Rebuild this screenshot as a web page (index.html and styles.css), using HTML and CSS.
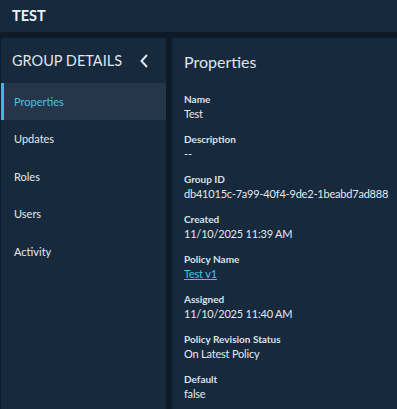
FILE: index.html
```html
<!DOCTYPE HTML>
<html>
<head>
<title>Group details</title>
<link rel="stylesheet" href="styles.css">
</head>
<body>
<div class="topbar">TEST</div>
<div class="layout">
	<div class="sidebar">
		<div class="side_head">
			<span>GROUP DETAILS</span>
			<svg class="chev" width="10" height="16" viewBox="0 0 10 16"><path d="M8 2 L2.5 8 L8 14" fill="none" stroke="#dfe5ea" stroke-width="2"/></svg>
		</div>
		<a class="nav_item active">Properties</a>
		<a class="nav_item">Updates</a>
		<a class="nav_item">Roles</a>
		<a class="nav_item">Users</a>
		<a class="nav_item">Activity</a>
	</div>
	<div class="content">
		<h2>Properties</h2>
		<div class="field"><div class="label">Name</div><div class="value">Test</div></div>
		<div class="field"><div class="label">Description</div><div class="value">--</div></div>
		<div class="field"><div class="label">Group ID</div><div class="value">db41015c-7a99-40f4-9de2-1beabd7ad888</div></div>
		<div class="field"><div class="label">Created</div><div class="value">11/10/2025 11:39 AM</div></div>
		<div class="field"><div class="label">Policy Name</div><div class="value"><a class="link">Test v1</a></div></div>
		<div class="field"><div class="label">Assigned</div><div class="value">11/10/2025 11:40 AM</div></div>
		<div class="field"><div class="label">Policy Revision Status</div><div class="value">On Latest Policy</div></div>
		<div class="field"><div class="label">Default</div><div class="value">false</div></div>
	</div>
</div>
</body>
</html>
```
FILE: styles.css
```css
html {
	background-color:#0d1a28;
}
body {
	margin:0;
	font-family:Lato, "Noto Sans", sans-serif;
	color:#e2e8ee;
	height:409px;
	overflow:hidden;
}
.topbar {
	background-color:#172a3d;
	height:32px;
	line-height:32px;
	padding-left:12px;
	font-weight:bold;
	font-size:14.5px;
	color:#eef2f5;
	margin-bottom:6px;
}
.layout {
	display:flex;
	gap:6px;
	padding-left:1px;
	height:371px;
}
.sidebar {
	width:165px;
	flex-shrink:0;
	background-color:#172a3d;
	display:flex;
	flex-direction:column;
}
.side_head {
	height:45px;
	display:flex;
	align-items:center;
	justify-content:space-between;
	padding:0 17px 0 11px;
	font-size:14.5px;
	white-space:nowrap;
	color:#dfe5ea;
}
.chev {
	margin-top:1px;
}
.nav_item {
	display:block;
	height:37.4px;
	line-height:37.4px;
	padding-left:13px;
	font-size:11px;
	color:#e2e8ee;
	cursor:pointer;
}
.nav_item.active {
	background-color:#25364a;
	color:#4cc1e6;
	border-left:3px solid #3fb8df;
	padding-left:10px;
}
.content {
	flex:1;
	min-width:0;
	background-color:#172a3d;
	padding:0 12px;
}
h2 {
	margin:0;
	height:45px;
	line-height:47px;
	font-weight:normal;
	font-size:16px;
	color:#dfe5ea;
}
.field {
	height:40px;
	padding-top:10px;
	box-sizing:border-box;
}
.label {
	font-size:10px;
	font-weight:bold;
	line-height:12px;
	color:#d9e0e6;
}
.value {
	font-size:11px;
	line-height:17px;
	letter-spacing:-0.2px;
	white-space:nowrap;
}
.link {
	color:#4cc1e6;
	text-decoration:underline;
}
```
